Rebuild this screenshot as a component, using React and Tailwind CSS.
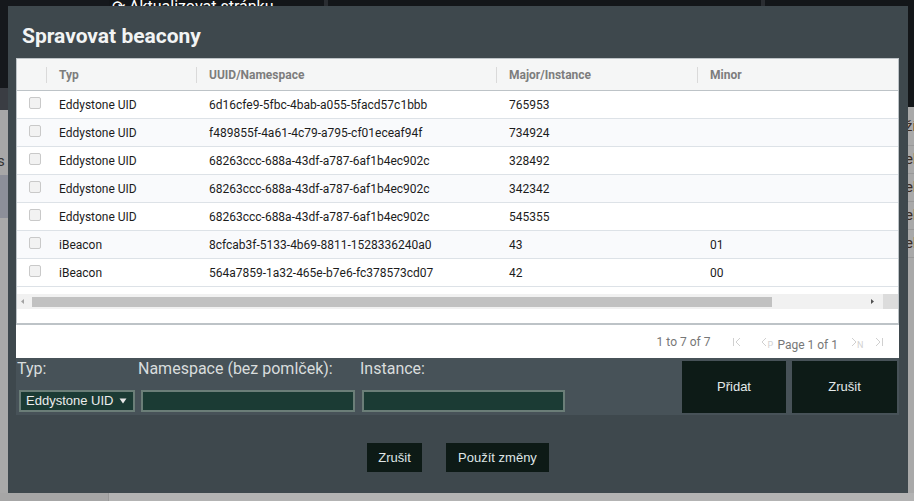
import React from "react";

const rows = [
  { typ: "Eddystone UID", uuid: "6d16cfe9-5fbc-4bab-a055-5facd57c1bbb", major: "765953", minor: "" },
  { typ: "Eddystone UID", uuid: "f489855f-4a61-4c79-a795-cf01eceaf94f", major: "734924", minor: "" },
  { typ: "Eddystone UID", uuid: "68263ccc-688a-43df-a787-6af1b4ec902c", major: "328492", minor: "" },
  { typ: "Eddystone UID", uuid: "68263ccc-688a-43df-a787-6af1b4ec902c", major: "342342", minor: "" },
  { typ: "Eddystone UID", uuid: "68263ccc-688a-43df-a787-6af1b4ec902c", major: "545355", minor: "" },
  { typ: "iBeacon", uuid: "8cfcab3f-5133-4b69-8811-1528336240a0", major: "43", minor: "01" },
  { typ: "iBeacon", uuid: "564a7859-1a32-465e-b7e6-fc378573cd07", major: "42", minor: "00" },
];

const columns = [
  { key: "typ", label: "Typ", width: "w-[150px]" },
  { key: "uuid", label: "UUID/Namespace", width: "w-[300px]" },
  { key: "major", label: "Major/Instance", width: "w-[201px]" },
  { key: "minor", label: "Minor", width: "w-[300px]" },
];

const Cell = ({ width, header, children }) => (
  <div className={`${width} shrink-0 flex items-center h-full`}>
    <span className={`w-px h-4 ${header ? "bg-[#dadada]" : ""}`} />
    <span className="ml-[12px] whitespace-nowrap">{children}</span>
  </div>
);

const PagerIcon = ({ dir, bar, letter, className }) => (
  <span className={`flex items-center text-[#d2d2d2] ${className}`}>
    <svg width="10" height="12" viewBox="0 0 10 12" fill="none" stroke="#d0d0d0" strokeWidth="1" className="shrink-0">
      {dir === "left" ? <polyline points="7,2 3,6 7,10" /> : <polyline points="3,2 7,6 3,10" />}
      {bar === "left" && <line x1="0.5" y1="2" x2="0.5" y2="10" />}
      {bar === "right" && <line x1="9.5" y1="2" x2="9.5" y2="10" />}
    </svg>
    <span className="text-[9px] leading-none mt-[8px] -ml-[2px]">{letter}</span>
  </span>
);

const Background = () => (
  <div className="absolute inset-0 flex bg-[#a9a9a9]">
    <div className="w-[108px] shrink-0 flex flex-col">
      <div className="h-[88px] bg-[#15181c]" />
      <div className="h-[22px] bg-[#3a3d43]" />
      <div className="h-[65px] bg-[#a7a7a7] flex items-end pb-[6px]">
        <span className="text-[15px] leading-[16px] text-[#333] -ml-[8px]">rs</span>
      </div>
      <div className="h-[43px] bg-[#8c8f99]" />
      <div className="flex-1 bg-[#a9a9a9]" />
      <div className="h-[8px] bg-[#a6a6a6]" />
    </div>
    <div className="w-px shrink-0 flex flex-col bg-[#999]">
      <div className="h-[107px] bg-[#15181c]" />
    </div>
    <div className="flex-1 min-w-0 flex flex-col">
      <div className="h-[107px] bg-[#131619] flex items-start">
        <div className="w-[215px] shrink-0 h-full flex items-start pl-[3px] text-white text-[16px] leading-[14px] whitespace-nowrap overflow-hidden">
          ⟳ Aktualizovat stránku
        </div>
        <div className="w-[4px] shrink-0 h-full bg-[#2a2d31]" />
        <div className="w-[433px] shrink-0 h-full" />
        <div className="w-[4px] shrink-0 h-full bg-[#2a2d31]" />
      </div>
      <div className="flex-1 flex flex-col text-[15px] text-[#3b2d25] whitespace-nowrap">
        <div className="h-[39px] border-b border-[#999] flex items-end pb-[8px] pl-[796px]">ží</div>
        {[0, 1, 2, 3].map((i) => (
          <div key={i} className="h-[28px] border-b border-[#999] flex items-center pl-[796px]">ek</div>
        ))}
      </div>
      <div className="h-[8px] bg-[#b3b3b3]" />
    </div>
  </div>
);

export default function App() {
  return (
    <div className="relative w-[914px] h-[501px] overflow-hidden font-['Roboto',sans-serif]">
      <Background />
      <div className="absolute left-[8px] top-[6px] w-[900px] h-[487px] bg-[#3e484d] flex flex-col">
        <div className="h-[52px] pl-[14px] pt-[18px] text-[21px] leading-[24px] font-bold text-[#f2f4f4]">
          Spravovat beacony
        </div>

        <div className="ml-[8px] w-[883px] bg-white flex flex-col">
          <div className="h-[267px] border border-b-2 border-[#bdc3c7] flex flex-col overflow-hidden">
            <div className="h-[32px] shrink-0 bg-[#f5f6f6] border-b border-[#bdc3c7] flex text-[12px] font-bold text-[#7d7d7d] pt-[1px]">
              <div className="w-[29px] shrink-0" />
              {columns.map((c) => (
                <Cell key={c.key} width={c.width} header>
                  {c.label}
                </Cell>
              ))}
            </div>
            {rows.map((r, i) => (
              <div
                key={i}
                className={`h-[28px] shrink-0 border-b border-[#dde2e7] flex text-[12px] text-[#1c1c1c] pt-[1px] ${
                  i % 2 === 1 ? "bg-[#f9fafc]" : "bg-white"
                }`}
              >
                <div className="w-[29px] shrink-0 pl-[12px] pt-[5px]">
                  <div className="w-[12px] h-[12px] rounded-[2px] border border-[#c9c9c9] bg-[#f2f2f2]" />
                </div>
                {columns.map((c) => (
                  <Cell key={c.key} width={c.width}>
                    {r[c.key]}
                  </Cell>
                ))}
              </div>
            ))}
            <div className="h-[7px] shrink-0" />
            <div className="h-[15px] shrink-0 flex">
              <div className="flex-1 bg-[#f1f1f1] flex items-center">
                <svg width="15" height="15" viewBox="0 0 15 15" className="shrink-0">
                  <polygon points="7,5 4,7.5 7,10" fill="#a3a3a3" />
                </svg>
                <div className="w-[740px] h-[10px] bg-[#c1c1c1]" />
                <div className="flex-1" />
                <svg width="15" height="15" viewBox="0 0 15 15" className="shrink-0 mr-[3px]">
                  <polygon points="6,5 9,7.5 6,10" fill="#505050" />
                </svg>
              </div>
              <div className="w-[15px] bg-[#dcdcdc]" />
            </div>
            <div className="flex-1" />
          </div>

          <div className="h-[33px] flex items-center justify-end pr-[15px] text-[12px] text-[#777]">
            <span>1 to 7 of 7</span>
            <PagerIcon dir="left" bar="left" letter="" className="ml-[23px] w-[10px]" />
            <PagerIcon dir="left" letter="P" className="ml-[16px] w-[11px]" />
            <span className="ml-[7px] pt-[6px]">Page 1 of 1</span>
            <PagerIcon dir="right" letter="N" className="ml-[11px] w-[12px]" />
            <PagerIcon dir="right" bar="right" letter="" className="ml-[12px] w-[11px]" />
          </div>
        </div>

        <div className="ml-[8px] w-[883px] h-[57px] bg-[#475258] flex pr-[2px]">
          <div className="flex flex-col">
            <span className="ml-[1px] mt-[1px] text-[16px] leading-[19px] text-[#d9dddd]">Typ:</span>
            <div className="ml-[3px] mt-[12px] w-[116px] h-[22px] border-2 border-[#6b7e78] bg-[#1b3b34] flex items-center pl-[5px] font-['Liberation_Sans',sans-serif] text-[13px] text-[#ececec]">
              Eddystone UID
              <svg width="8" height="6" viewBox="0 0 8 6" className="ml-[6px]">
                <polygon points="0.5,0.5 7.5,0.5 4,5.5" fill="#e8e8e8" />
              </svg>
            </div>
          </div>
          <div className="flex flex-col ml-[3px]">
            <span className="mt-[1px] text-[16px] leading-[19px] text-[#d9dddd]">Namespace (bez pomlček):</span>
            <div className="ml-[3px] mt-[12px] w-[214px] h-[22px] border-2 border-[#6b7e78] bg-[#1b3b34]" />
          </div>
          <div className="flex flex-col ml-[5px]">
            <span className="mt-[1px] text-[16px] leading-[19px] text-[#d9dddd]">Instance:</span>
            <div className="ml-[2px] mt-[12px] w-[203px] h-[22px] border-2 border-[#6b7e78] bg-[#1b3b34]" />
          </div>
          <div className="ml-auto mt-[3px] flex gap-[6px] font-['Liberation_Sans',sans-serif] text-[13px] text-[#e3e9e9]">
            <button className="w-[104px] h-[52px] bg-[#0d1b17]">Přidat</button>
            <button className="w-[105px] h-[52px] bg-[#0d1b17]">Zrušit</button>
          </div>
        </div>

        <div className="mt-[28px] flex justify-center gap-[24px] font-['Liberation_Sans',sans-serif] text-[13px] text-[#dfe6e6]">
          <button className="w-[55px] h-[29px] bg-[#0d1a16]">Zrušit</button>
          <button className="w-[103px] h-[29px] bg-[#0d1a16]">Použít změny</button>
        </div>
      </div>
    </div>
  );
}
